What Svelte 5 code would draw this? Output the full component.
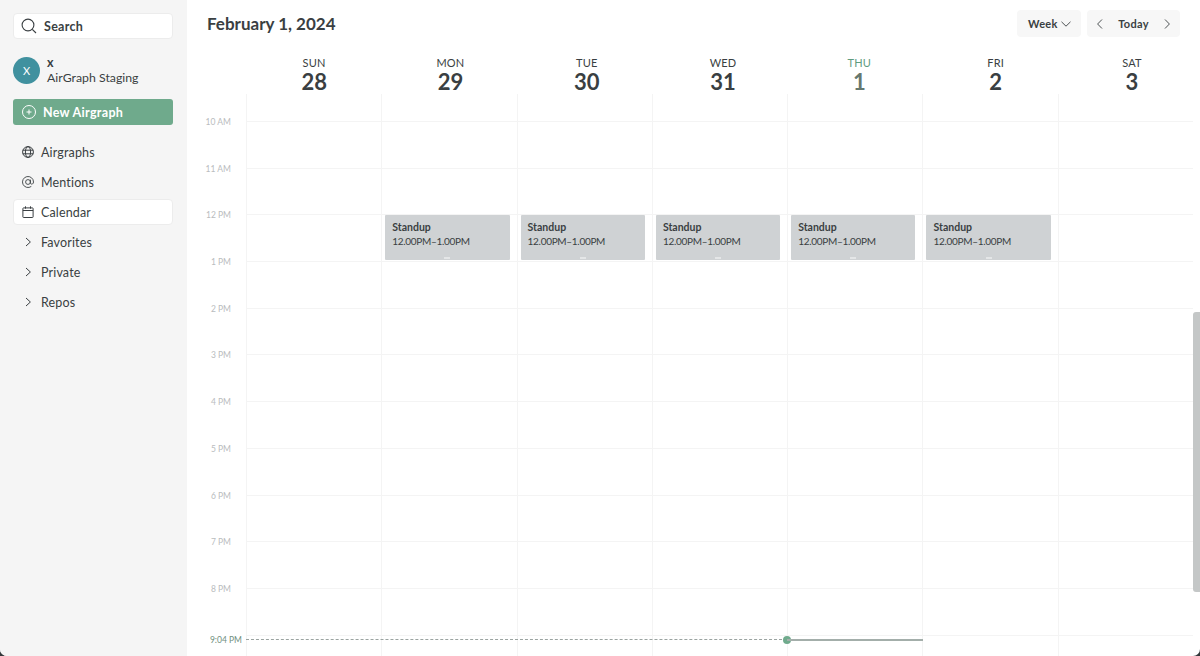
<script lang="ts">
  const days = [
    { name: 'SUN', num: 28 },
    { name: 'MON', num: 29 },
    { name: 'TUE', num: 30 },
    { name: 'WED', num: 31 },
    { name: 'THU', num: 1, today: true },
    { name: 'FRI', num: 2 },
    { name: 'SAT', num: 3 }
  ];

  const hours = ['10 AM', '11 AM', '12 PM', '1 PM', '2 PM', '3 PM', '4 PM', '5 PM', '6 PM', '7 PM', '8 PM', ''];

  // columns that hold the recurring event in the 12 PM row
  const standupDays = [1, 2, 3, 4, 5];
</script>

<div class="app">
  <aside class="sidebar">
    <div class="search">
      <svg width="18" height="18" viewBox="0 0 18 18" fill="none" stroke="#3a3f42" stroke-width="1.1">
        <circle cx="8" cy="8" r="5.9" />
        <path d="M12.3 12.3L16 16" />
      </svg>
      <span>Search</span>
    </div>

    <div class="workspace">
      <div class="avatar">X</div>
      <div class="workspace-text">
        <span class="workspace-user">x</span>
        <span class="workspace-name">AirGraph Staging</span>
      </div>
    </div>

    <button class="new-btn">
      <svg width="16" height="16" viewBox="0 0 16 16" fill="none" stroke="#fff" stroke-width="1">
        <circle cx="8" cy="8" r="6.5" />
        <path d="M8 5.5v5M5.5 8h5" />
      </svg>
      New Airgraph
    </button>

    <nav class="nav">
      <div class="nav-item">
        <svg width="14" height="14" viewBox="0 0 14 14" fill="none" stroke="#3a3f42" stroke-width="1">
          <circle cx="7" cy="7" r="5.4" />
          <ellipse cx="7" cy="7" rx="2.6" ry="5.4" />
          <path d="M1.8 5.2h10.4M1.8 8.8h10.4" />
        </svg>
        Airgraphs
      </div>
      <div class="nav-item">
        <svg width="14" height="14" viewBox="0 0 14 14" fill="none" stroke="#3a3f42" stroke-width="0.9">
          <circle cx="7" cy="7" r="2.4" />
          <path d="M9.4 4.6v3.2c0 1.9 3.1 1.9 3.1-.8a5.5 5.5 0 1 0-2.2 4.4" />
        </svg>
        Mentions
      </div>
      <div class="nav-item active">
        <svg width="14" height="14" viewBox="0 0 14 14" fill="none" stroke="#3a3f42" stroke-width="1">
          <rect x="1.9" y="2.9" width="10.2" height="9.6" rx="0.6" />
          <path d="M1.9 5.5h10.2M4.5 1.3v2.4M9.5 1.3v2.4" />
        </svg>
        Calendar
      </div>
      {#each ['Favorites', 'Private', 'Repos'] as label}
        <div class="nav-item">
          <svg width="14" height="14" viewBox="0 0 14 14" fill="none" stroke="#3a3f42" stroke-width="1">
            <path d="M5 3l4.4 4L5 11" />
          </svg>
          {label}
        </div>
      {/each}
    </nav>
  </aside>

  <main class="main">
    <header class="topbar">
      <h1>February 1, 2024</h1>
      <div class="controls">
        <div class="control week">
          <span>Week</span>
          <svg width="12" height="12" viewBox="0 0 12 12" fill="none" stroke="#3a3f42" stroke-width="0.9">
            <path d="M1.5 3.8L6 8.2l4.5-4.4" />
          </svg>
        </div>
        <div class="control nav-today">
          <svg width="12" height="12" viewBox="0 0 12 12" fill="none" stroke="#3a3f42" stroke-width="0.9">
            <path d="M8 1.5L3.6 6 8 10.5" />
          </svg>
          <span>Today</span>
          <svg width="12" height="12" viewBox="0 0 12 12" fill="none" stroke="#3a3f42" stroke-width="0.9">
            <path d="M4 1.5L8.4 6 4 10.5" />
          </svg>
        </div>
      </div>
    </header>

    <div class="day-head">
      {#each days as day}
        <div class="day" class:current={day.today}>
          <span class="day-name">{day.name}</span>
          <span class="day-num">{day.num}</span>
        </div>
      {/each}
    </div>

    <div class="calendar">
      <div class="lead-row">
        <div class="gutter"></div>
        {#each days as _}
          <div class="cell lead"></div>
        {/each}
      </div>
      {#each hours as hour}
        <div class="row">
          <div class="gutter"><span class="hour">{hour}</span></div>
          {#each days as _, d}
            <div class="cell">
              {#if hour === '12 PM' && standupDays.includes(d)}
                <div class="event">
                  <span class="event-title">Standup</span>
                  <span class="event-time">12.00PM–1.00PM</span>
                  <span class="event-grip"></span>
                </div>
              {/if}
            </div>
          {/each}
        </div>
      {/each}

      <div class="now">
        <span class="now-label">9:04 PM</span>
        <span class="now-dashes"></span>
        <span class="now-dot"></span>
        <span class="now-line"></span>
      </div>
    </div>

    <div class="scrollbar"></div>
  </main>
</div>

<style>
  :global(body) {
    margin: 0;
    background: #33383b;
  }

  .app {
    display: flex;
    height: 656px;
    overflow: hidden;
    border-radius: 0 0 7px 7px;
    background: #fff;
    font-family: Lato, 'Open Sans', sans-serif;
    color: #3a3f42;
  }

  /* Sidebar */
  .sidebar {
    width: 187px;
    flex: none;
    box-sizing: border-box;
    padding: 13px 14px 0 13px;
    background: #f5f5f5;
  }

  .search {
    display: flex;
    align-items: center;
    gap: 6px;
    height: 26px;
    box-sizing: border-box;
    padding-left: 6px;
    background: #fff;
    border: 1px solid #ececec;
    border-radius: 4px;
    font-size: 12.5px;
    font-weight: 700;
    letter-spacing: 0.3px;
  }

  .search span {
    padding-top: 1px;
  }

  .workspace {
    display: flex;
    align-items: center;
    gap: 7px;
    margin-top: 16px;
  }

  .avatar {
    width: 27px;
    height: 27px;
    border-radius: 50%;
    background: #40919f;
    color: #fff;
    font-size: 11px;
    display: flex;
    align-items: center;
    justify-content: center;
  }

  .workspace-text {
    display: flex;
    flex-direction: column;
    line-height: 15px;
  }

  .workspace-user {
    font-size: 12.5px;
    font-weight: 700;
  }

  .workspace-name {
    font-size: 12.3px;
  }

  .new-btn {
    display: flex;
    align-items: center;
    gap: 6px;
    width: 100%;
    height: 26px;
    margin-top: 14px;
    padding: 0 0 0 8px;
    border: none;
    border-radius: 3px;
    background: #6faa8c;
    color: #fff;
    font-family: inherit;
    font-size: 12.5px;
    font-weight: 700;
    letter-spacing: 0.3px;
  }

  .nav {
    display: flex;
    flex-direction: column;
    gap: 4px;
    margin-top: 14px;
  }

  .nav-item {
    display: flex;
    align-items: center;
    gap: 6px;
    height: 26px;
    box-sizing: border-box;
    padding-left: 7px;
    border: 1px solid transparent;
    border-radius: 4px;
    font-size: 12.5px;
    letter-spacing: 0.15px;
  }

  .nav-item.active {
    background: #fff;
    border-color: #ececec;
  }

  /* Main */
  .main {
    position: relative;
    flex: 1;
    min-width: 0;
    display: flex;
    flex-direction: column;
  }

  .topbar {
    display: flex;
    align-items: center;
    justify-content: space-between;
    height: 47px;
    box-sizing: border-box;
    padding: 0 20px;
    flex: none;
  }

  h1 {
    margin: -1px 0 0;
    font-size: 17px;
    font-weight: 700;
  }

  .controls {
    display: flex;
    gap: 6px;
  }

  .control {
    display: flex;
    align-items: center;
    height: 27px;
    box-sizing: border-box;
    background: #f7f7f7;
    border-radius: 4px;
    font-size: 11px;
    font-weight: 700;
    letter-spacing: 0.3px;
  }

  .week {
    width: 64px;
    padding: 0 9px 0 11px;
    justify-content: space-between;
  }

  .nav-today {
    width: 93px;
    padding: 0 7px;
    justify-content: space-between;
  }

  .day-head {
    display: grid;
    grid-template-columns: repeat(7, 136.3px);
    margin-left: 59px;
    height: 47px;
    flex: none;
  }

  .day {
    display: flex;
    flex-direction: column;
    align-items: center;
  }

  .day-name {
    font-size: 11px;
    line-height: 14px;
    margin-top: 9px;
    letter-spacing: 0.2px;
  }

  .day-num {
    font-size: 22px;
    font-weight: 700;
    line-height: 24px;
  }

  .day.current .day-name {
    color: #5f9c80;
  }

  .day.current .day-num {
    color: #66786f;
  }

  /* Calendar grid */
  .calendar {
    position: relative;
    flex: 1;
    min-height: 0;
    overflow: hidden;
  }

  .lead-row {
    display: grid;
    grid-template-columns: 59px repeat(7, 135.3px);
    height: 27px;
  }

  .row {
    display: grid;
    grid-template-columns: 59px repeat(7, 135.3px);
    height: 46.7px;
  }

  .gutter {
    position: relative;
  }

  .hour {
    position: absolute;
    right: 15px;
    top: -4px;
    font-size: 8.5px;
    line-height: 10px;
    color: #b9bcbe;
    white-space: nowrap;
  }

  .cell {
    box-sizing: border-box;
    border-left: 1px solid #f4f4f4;
    border-top: 1px solid #f4f4f4;
    padding: 0 7px 0 3px;
  }

  .cell.lead {
    border-top: none;
  }

  .event {
    position: relative;
    box-sizing: border-box;
    height: 45px;
    padding: 6px 7px;
    background: #cfd2d4;
    border-radius: 1px;
    display: flex;
    flex-direction: column;
  }

  .event-title {
    font-size: 10.5px;
    font-weight: 700;
    line-height: 13px;
  }

  .event-time {
    font-size: 10px;
    line-height: 15px;
    letter-spacing: -0.3px;
  }

  .event-grip {
    position: absolute;
    bottom: 1px;
    left: 50%;
    width: 6px;
    height: 2px;
    margin-left: -3px;
    background: #e4e6e7;
  }

  /* Now indicator */
  .now {
    position: absolute;
    left: 0;
    top: 542px;
    width: 736px;
    height: 8px;
  }

  .now-label {
    position: absolute;
    right: 681px;
    top: -1px;
    font-size: 8.5px;
    line-height: 10px;
    color: #6f8f80;
    white-space: nowrap;
  }

  .now-dashes {
    position: absolute;
    left: 59px;
    width: 541px;
    top: 3px;
    border-top: 1px dashed #9aa3a0;
  }

  .now-dot {
    position: absolute;
    left: 596px;
    top: 0;
    width: 8px;
    height: 8px;
    border-radius: 50%;
    background: #6faa8c;
  }

  .now-line {
    position: absolute;
    left: 600px;
    width: 136px;
    top: 3px;
    height: 2px;
    background: #a3aeaa;
  }

  .scrollbar {
    position: absolute;
    right: 0;
    top: 312px;
    width: 7px;
    height: 280px;
    border-radius: 3px 0 0 3px;
    background: #c4c7c7;
  }
</style>
